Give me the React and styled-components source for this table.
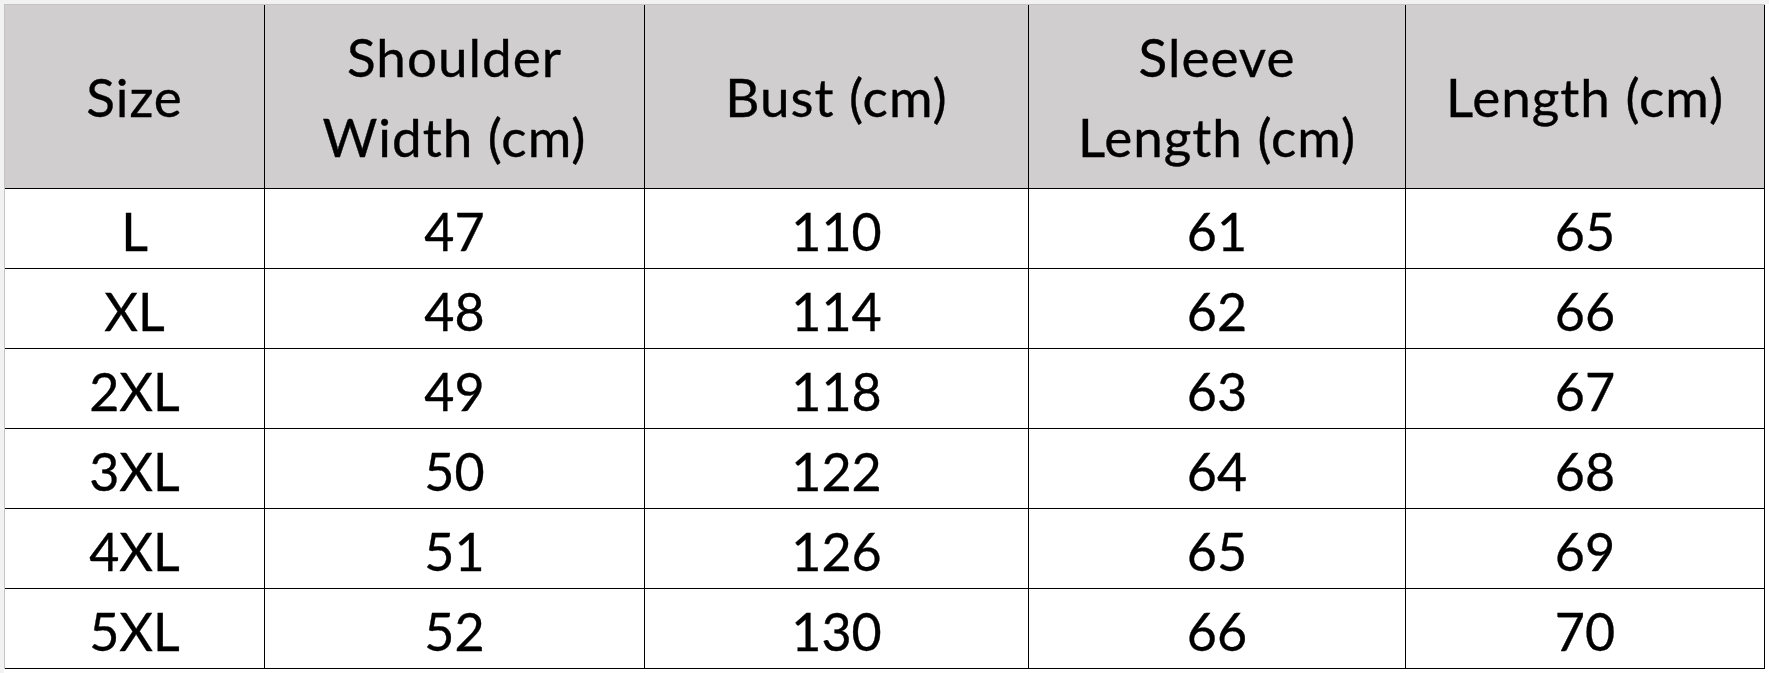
import React from "react";
import styled, { createGlobalStyle } from "styled-components";

const GlobalStyle = createGlobalStyle`
  html, body {
    margin: 0;
    padding: 0;
    background: #ffffff;
  }
  body {
    font-family: Lato, "Open Sans", "Liberation Sans", sans-serif;
    color: #000;
  }
`;

const Sheet = styled.div`
  width: 1769px;
  height: 673px;
  box-sizing: border-box;
  padding: 4px 0 0 4px;
  background: linear-gradient(#f2f2f2, #f2f2f2) top left / 100% 4px no-repeat,
    linear-gradient(#f2f2f2, #f2f2f2) top left / 4px 100% no-repeat, #ffffff;
  overflow: hidden;
`;

const Table = styled.div`
  display: grid;
  grid-template-columns: 260px 380px 384px 377px 359px;
  grid-template-rows: 184px repeat(6, 80px);
  width: max-content;
  border-top: 1px solid #c4c4c4;
  border-left: 1px solid #c4c4c4;
`;

const Cell = styled.div`
  display: flex;
  align-items: center;
  justify-content: center;
  box-sizing: border-box;
  border-right: 1px solid #000;
  border-bottom: 1px solid #000;
  background: ${(p) => (p.$head ? "#d0cece" : "#ffffff")};
  font-size: ${(p) => (p.$head ? "53px" : "52px")};
  letter-spacing: ${(p) => (p.$head ? "1px" : "0")};
  line-height: ${(p) => (p.$head ? "80px" : "1")};
  -webkit-text-stroke: 0.35px #000;
  text-align: center;
  padding-top: ${(p) => (p.$head ? "0" : "4px")};
`;

const headers = [
  ["Size"],
  ["Shoulder", "Width (cm)"],
  ["Bust (cm)"],
  ["Sleeve", "Length (cm)"],
  ["Length (cm)"],
];

const rows = [
  ["L", 47, 110, 61, 65],
  ["XL", 48, 114, 62, 66],
  ["2XL", 49, 118, 63, 67],
  ["3XL", 50, 122, 64, 68],
  ["4XL", 51, 126, 65, 69],
  ["5XL", 52, 130, 66, 70],
];

export default function App() {
  return (
    <>
      <GlobalStyle />
      <Sheet>
        <Table>
          {headers.map((lines) => (
            <Cell $head key={lines.join(" ")}>
              <div>
                {lines.map((l) => (
                  <div key={l}>{l}</div>
                ))}
              </div>
            </Cell>
          ))}
          {rows.map((row) =>
            row.map((v, i) => <Cell key={row[0] + i}>{v}</Cell>)
          )}
        </Table>
      </Sheet>
    </>
  );
}
